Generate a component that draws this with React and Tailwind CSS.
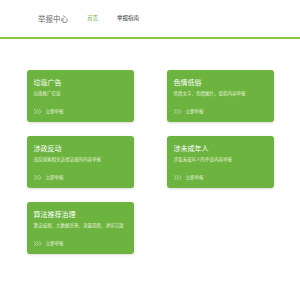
const cards = [
  { title: '垃圾广告', desc: '垃圾推广信息' },
  { title: '色情低俗', desc: '色情文字、色情图片、低俗内容举报' },
  { title: '涉政反动', desc: '违反国家相关法律法规的内容举报' },
  { title: '涉未成年人', desc: '涉及未成年人的不良内容举报' },
  { title: '算法推荐治理', desc: '算法歧视、大数据杀熟、流量造假、诱导沉迷' },
];

function Chevrons() {
  return (
    <svg className="h-[5px] w-[8px]" viewBox="0 0 16 10" fill="none" aria-hidden>
      <path d="M1 1l3 4-3 4M6 1l3 4-3 4M11 1l3 4-3 4" stroke="currentColor" strokeWidth="1.2" strokeLinecap="round" strokeLinejoin="round" />
    </svg>
  );
}

function ReportCard({ title, desc }) {
  return (
    <div className="flex h-[52px] flex-col rounded-[3px] bg-[#6db33f] px-[7px] pt-[8px] text-white shadow-[0_1px_3px_rgba(0,0,0,0.15)]">
      <p className="text-[7px] leading-[9px]">{title}</p>
      <p className="mt-[3px] text-[4.5px] leading-[6px] text-[#e6f3da]">{desc}</p>
      <div className="mt-auto mb-[8px] flex items-center gap-[4px] text-[4.5px] leading-[6px] text-[#e6f3da]">
        <Chevrons />
        <span>立即举报</span>
      </div>
    </div>
  );
}

export default function App() {
  return (
    <div className="h-[300px] w-[300px] bg-white font-['Noto_Sans_CJK_SC',sans-serif]">
      <div className="flex h-[37px] items-center pl-[38px]">
        <span className="text-[7.5px] text-[#666]">举报中心</span>
        <span className="ml-[19px] text-[5.5px] text-[#6db33f]">首页</span>
        <span className="ml-[19px] text-[5.5px] text-[#333]">举报指南</span>
      </div>
      <div className="h-[2px] bg-[#8cc63f]" />
      <div className="mx-auto mt-[31px] grid w-[247px] grid-cols-2 gap-x-[33px] gap-y-[14px]">
        {cards.map((c) => (
          <ReportCard key={c.title} {...c} />
        ))}
      </div>
    </div>
  );
}
